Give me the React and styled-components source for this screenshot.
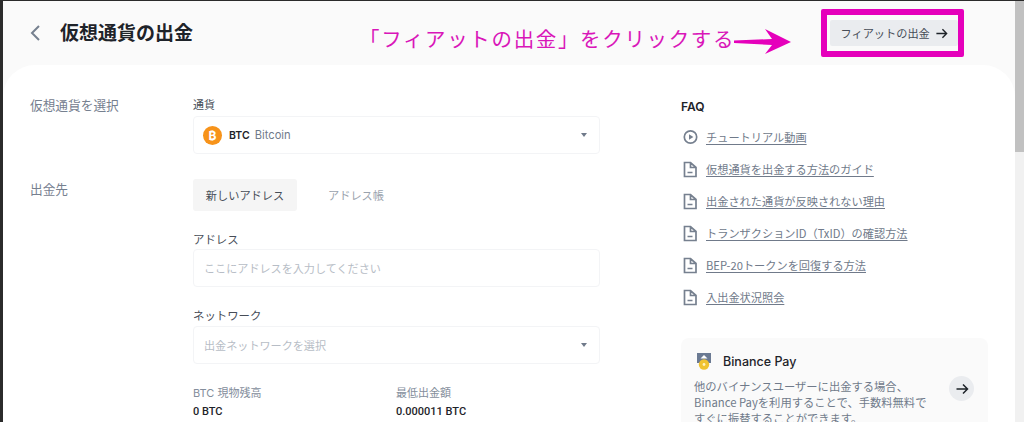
import React from "react";
import styled, { createGlobalStyle } from "styled-components";

const Global = createGlobalStyle`
  html, body { margin: 0; padding: 0; height: 422px; overflow: hidden; background: #fafafa; }
  body { font-family: "Inter", "Noto Sans CJK JP", sans-serif; color: #1e2329; }
  * { box-sizing: border-box; }
`;

const Page = styled.div`
  width: 1024px;
  height: 422px;
  overflow: hidden;
  display: flex;
  border-top: 1px solid #2b2b2b;
  border-left: 3px solid #2b2b2b;
`;

const Main = styled.div`
  flex: 1;
  min-width: 0;
  display: flex;
  flex-direction: column;
  background: #fafafa;
`;

const Scrollbar = styled.div`
  width: 9px;
  flex: none;
  background: #f1f1f1;
`;

const Thumb = styled.div`
  height: 151px;
  background: #c1c1c1;
`;

const Header = styled.header`
  height: 64px;
  flex: none;
  display: flex;
  align-items: center;
  padding: 0 0 0 26px;
`;

const Back = styled.svg`
  width: 12px;
  height: 18px;
  fill: none;
  stroke: #76808f;
  stroke-width: 2;
`;

const Title = styled.h1`
  margin: 2px 0 0 19px;
  font-size: 19px;
  line-height: 24px;
  font-weight: 700;
  color: #1e2329;
  width: 299px;
  flex: none;
`;

const Callout = styled.div`
  display: flex;
  align-items: center;
  flex: none;
  position: relative;
  top: 7px;
`;

const CalloutText = styled.span`
  font-size: 20.5px;
  line-height: 28px;
  letter-spacing: 1.65px;
  color: #d916b9;
  white-space: nowrap;
`;

const CalloutArrow = styled.svg`
  width: 58px;
  height: 26px;
  margin-left: -1px;
  margin-top: 3px;
  flex: none;
`;

const Highlight = styled.div`
  margin-left: 29px;
  width: 143px;
  height: 48px;
  border: 6px solid #e500bb;
  border-radius: 2px;
  padding: 5px 0 0 3px;
  flex: none;
`;

const FiatButton = styled.div`
  width: 128px;
  height: 26px;
  background: #eaecef;
  display: flex;
  align-items: center;
  justify-content: center;
  gap: 5px;
  font-size: 11.2px;
  color: #474d57;
  border-radius: 2px;
`;

const Card = styled.main`
  flex: 1;
  background: #fff;
  border-radius: 32px 32px 0 0;
  display: grid;
  grid-template-columns: 163px 407px 1fr;
  padding-top: 31px;
  padding-left: 27px;
  overflow: hidden;
`;

const SectionLabel = styled.div`
  font-size: 12.7px;
  line-height: 20px;
  height: 20px;
  color: #76808f;
  margin-top: ${(p) => p.$top}px;
`;

const LeftCol = styled.div`
  display: flex;
  flex-direction: column;
`;

const FormCol = styled.div`
  display: flex;
  flex-direction: column;
`;

const FieldLabel = styled.div`
  font-size: ${(p) => p.$size || 11.4}px;
  line-height: 16px;
  color: #474d57;
  margin-top: ${(p) => p.$top || 0}px;
`;

const Field = styled.div`
  height: 38px;
  margin-top: ${(p) => p.$gap || 3}px;
  border: 1px solid #f3f4f6;
  border-radius: 4px;
  display: flex;
  align-items: center;
  padding: 0 12px 0 8px;
  font-size: 12px;
`;

const Coin = styled.span`
  width: 19px;
  height: 19px;
  margin-left: 1px;
  border-radius: 50%;
  background: #f7931a;
  color: #fff;
  font-size: 12px;
  font-weight: 700;
  display: flex;
  align-items: center;
  justify-content: center;
  flex: none;
`;

const Symbol = styled.span`
  margin-left: 7px;
  font-weight: 600;
  font-size: 10.5px;
  color: #1e2329;
`;

const CoinName = styled.span`
  margin-left: 5px;
  font-size: 11.2px;
  color: #707a8a;
`;

const Placeholder = styled.span`
  font-size: 11.1px;
  color: #b7bdc6;
  flex: 1;
  padding-left: 2px;
`;

const Caret = styled.span`
  margin-left: auto;
  width: 0;
  height: 0;
  border-left: 3px solid transparent;
  border-right: 3px solid transparent;
  border-top: 4px solid #707a8a;
`;

const Tabs = styled.div`
  display: flex;
  align-items: center;
  margin-top: 25px;
`;

const Tab = styled.div`
  height: 32px;
  width: ${(p) => p.$w}px;
  display: flex;
  align-items: center;
  justify-content: center;
  font-size: 11.2px;
  color: ${(p) => (p.$active ? "#474d57" : "#9aa2ad")};
  background: ${(p) => (p.$active ? "#f5f5f5" : "transparent")};
  border-radius: 3px;
`;

const Stats = styled.div`
  display: grid;
  grid-template-columns: 203px 1fr;
  margin-top: 21px;
`;

const StatLabel = styled.div`
  font-size: 11px;
  line-height: 16px;
  color: #848e9c;
`;

const StatValue = styled.div`
  font-family: "Roboto", sans-serif;
  font-size: 11px;
  line-height: 16px;
  margin-top: 3px;
  font-weight: 500;
  color: #1e2329;
`;

const SideCol = styled.aside`
  padding-left: 81px;
  padding-right: 27px;
  display: flex;
  flex-direction: column;
`;

const FaqTitle = styled.div`
  font-size: 12px;
  line-height: 18px;
  font-weight: 600;
  color: #1e2329;
  margin-top: 2px;
`;

const FaqList = styled.div`
  display: flex;
  flex-direction: column;
  gap: 10px;
  margin-top: 10px;
`;

const FaqRow = styled.div`
  height: 22px;
  display: flex;
  align-items: center;
  gap: 7px;
`;

const FaqIcon = styled.svg`
  width: 18px;
  height: 18px;
  flex: none;
  fill: none;
  stroke: #76808f;
  stroke-width: 1.7;
`;

const FaqLink = styled.span`
  font-family: "Noto Sans CJK JP", sans-serif;
  font-size: 11.2px;
  color: #707a8a;
  text-decoration: underline;
  text-underline-offset: 2px;
  white-space: nowrap;
`;

const PayCard = styled.div`
  margin-top: 30px;
  width: 307px;
  height: 120px;
  background: #fafafa;
  border-radius: 8px;
  padding: 15px 0 0 13px;
`;

const PayHead = styled.div`
  display: flex;
  align-items: center;
  gap: 11px;
  padding-left: 2px;
`;

const PayName = styled.span`
  font-size: 12.5px;
  font-weight: 500;
  color: #1e2329;
`;

const PayBody = styled.div`
  display: flex;
  align-items: flex-start;
  margin-top: 8px;
`;

const PayText = styled.p`
  margin: 0;
  width: 232px;
  flex: none;
  font-family: "Noto Sans CJK JP", sans-serif;
  font-size: 11.3px;
  line-height: 16px;
  color: #707a8a;
  white-space: nowrap;
`;

const RoundArrow = styled.span`
  width: 25px;
  height: 25px;
  margin-left: 23px;
  margin-top: -2px;
  border-radius: 50%;
  background: #eaecef;
  display: flex;
  align-items: center;
  justify-content: center;
`;

const Arrow = ({ size = 14 }) => (
  <svg width={size} height={size} viewBox="0 0 14 14" fill="none" stroke="#1e2329" strokeWidth="1.5">
    <path d="M1.5 7h11M8 2.5 12.5 7 8 11.5" />
  </svg>
);

const PlayIcon = () => (
  <FaqIcon viewBox="0 0 18 18">
    <circle cx="9.5" cy="9" r="6.2" />
    <path d="M8 6.2 12.4 9 8 11.8z" fill="#76808f" stroke="none" />
  </FaqIcon>
);

const DocIcon = () => (
  <FaqIcon viewBox="0 0 18 18">
    <path d="M3.5 2.5h6l5.5 5v9H3.5zM9.5 2.5v5H15M6.5 12.5h5" />
  </FaqIcon>
);

const faqs = [
  "仮想通貨を出金する方法のガイド",
  "出金された通貨が反映されない理由",
  "トランザクションID（TxID）の確認方法",
  "BEP-20トークンを回復する方法",
  "入出金状況照会",
];

export default function App() {
  return (
    <>
      <Global />
      <Page>
        <Main>
          <Header>
            <Back viewBox="0 0 12 18">
              <path d="M10 2 3 9l7 7" />
            </Back>
            <Title>仮想通貨の出金</Title>
            <Callout>
              <CalloutText>「フィアットの出金」をクリックする</CalloutText>
              <CalloutArrow viewBox="0 0 58 26">
                <path d="M57 13 31 0 38 10 0 11.5V14L38 16 31 25z" fill="#e500bb" />
              </CalloutArrow>
            </Callout>
            <Highlight>
              <FiatButton>
                フィアットの出金 <Arrow size={13} />
              </FiatButton>
            </Highlight>
          </Header>
          <Card>
            <LeftCol>
              <SectionLabel $top={0}>仮想通貨を選択</SectionLabel>
              <SectionLabel $top={64}>出金先</SectionLabel>
            </LeftCol>
            <FormCol>
              <FieldLabel $size={11} $top={1}>通貨</FieldLabel>
              <Field>
                <Coin>₿</Coin>
                <Symbol>BTC</Symbol>
                <CoinName>Bitcoin</CoinName>
                <Caret />
              </Field>
              <Tabs>
                <Tab $active $w={104}>新しいアドレス</Tab>
                <Tab $w={118}>アドレス帳</Tab>
              </Tabs>
              <FieldLabel $top={21}>アドレス</FieldLabel>
              <Field $gap={1}>
                <Placeholder>ここにアドレスを入力してください</Placeholder>
              </Field>
              <FieldLabel $top={21}>ネットワーク</FieldLabel>
              <Field $gap={2}>
                <Placeholder>出金ネットワークを選択</Placeholder>
                <Caret />
              </Field>
              <Stats>
                <div>
                  <StatLabel>BTC 現物残高</StatLabel>
                  <StatValue>0 BTC</StatValue>
                </div>
                <div>
                  <StatLabel>最低出金額</StatLabel>
                  <StatValue>0.000011 BTC</StatValue>
                </div>
              </Stats>
            </FormCol>
            <SideCol>
              <FaqTitle>FAQ</FaqTitle>
              <FaqList>
                <FaqRow>
                  <PlayIcon />
                  <FaqLink>チュートリアル動画</FaqLink>
                </FaqRow>
                {faqs.map((f) => (
                  <FaqRow key={f}>
                    <DocIcon />
                    <FaqLink>{f}</FaqLink>
                  </FaqRow>
                ))}
              </FaqList>
              <PayCard>
                <PayHead>
                  <svg width="16" height="17" viewBox="0 0 16 17">
                    <path d="M1 0h14v10H1z" fill="#6b7a93" />
                    <path d="M8 2l3.5 3.5h-7z" fill="#fff" />
                    <circle cx="8" cy="11.5" r="5.2" fill="#f0c330" />
                    <circle cx="8" cy="11.5" r="1.4" fill="#fff3c0" />
                  </svg>
                  <PayName>Binance Pay</PayName>
                </PayHead>
                <PayBody>
                  <PayText>
                    他のバイナンスユーザーに出金する場合、
                    <br />
                    Binance Payを利用することで、手数料無料で
                    <br />
                    すぐに振替することができます。
                  </PayText>
                  <RoundArrow>
                    <Arrow size={14} />
                  </RoundArrow>
                </PayBody>
              </PayCard>
            </SideCol>
          </Card>
        </Main>
        <Scrollbar>
          <Thumb />
        </Scrollbar>
      </Page>
    </>
  );
}
